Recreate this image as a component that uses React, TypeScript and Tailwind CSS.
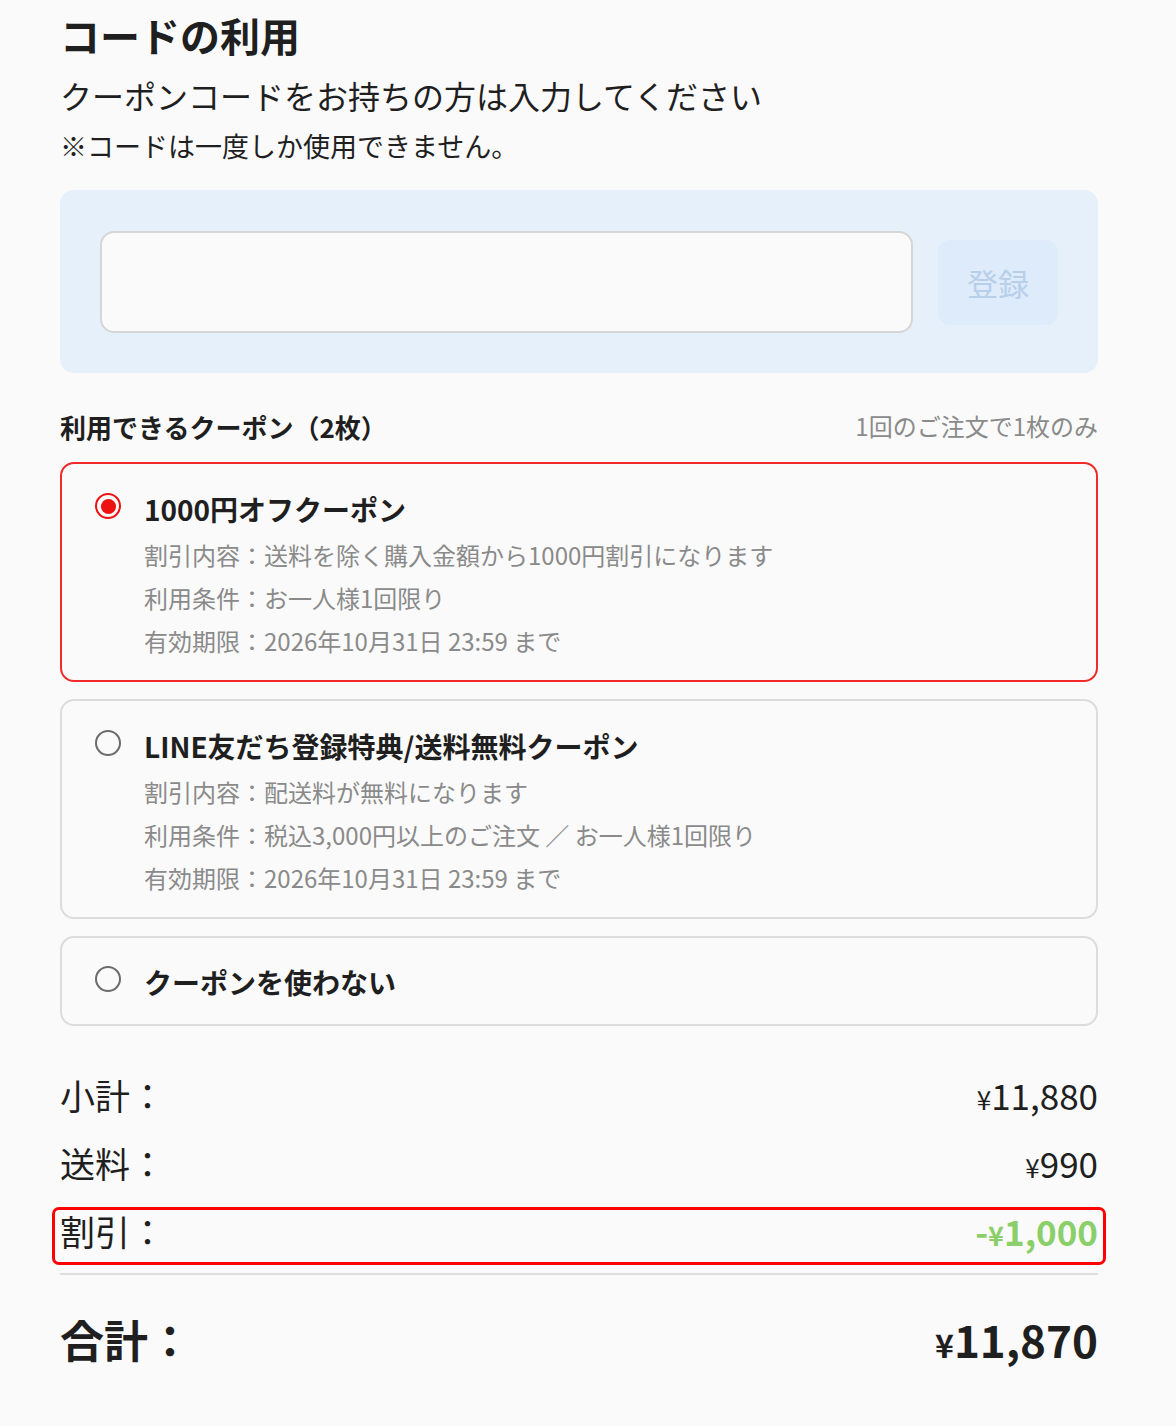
import React from "react";

const font = { fontFamily: '"Noto Sans CJK JP", "Noto Sans", sans-serif' };

function Radio({ checked }: { checked: boolean }) {
  if (checked) {
    return (
      <div className="w-[26px] h-[26px] rounded-full border-[2.5px] border-[#ee1111] flex items-center justify-center shrink-0">
        <div className="w-[15px] h-[15px] rounded-full bg-[#ee1111]" />
      </div>
    );
  }
  return <div className="w-[26px] h-[26px] rounded-full border-2 border-[#6b6b6b] shrink-0" />;
}

type Coupon = {
  title: string;
  lines: string[];
  selected: boolean;
};

const coupons: Coupon[] = [
  {
    title: "1000円オフクーポン",
    lines: [
      "割引内容：送料を除く購入金額から1000円割引になります",
      "利用条件：お一人様1回限り",
      "有効期限：2026年10月31日 23:59 まで",
    ],
    selected: true,
  },
  {
    title: "LINE友だち登録特典/送料無料クーポン",
    lines: [
      "割引内容：配送料が無料になります",
      "利用条件：税込3,000円以上のご注文 ／ お一人様1回限り",
      "有効期限：2026年10月31日 23:59 まで",
    ],
    selected: false,
  },
];

function CouponCard({ c }: { c: Coupon }) {
  return (
    <div
      className={
        "rounded-[14px] border-2 pl-[33px] pt-[25px] pb-[18px] bg-[#fafafa] " +
        (c.selected ? "border-[#f22a2a]" : "border-[#dcdcdc]")
      }
    >
      <div className="flex">
        <div className="mt-[4px] mr-[23px]">
          <Radio checked={c.selected} />
        </div>
        <div className="flex flex-col">
          <div className="text-[28px] leading-[40px] font-bold text-[#1f1f1f]">{c.title}</div>
          <div className="mt-[4px] flex flex-col">
            {c.lines.map((l, i) => (
              <div key={i} className="text-[24px] leading-[43px] text-[#8a8a8a]">
                {l}
              </div>
            ))}
          </div>
        </div>
      </div>
    </div>
  );
}

export default function App() {
  return (
    <div className="min-h-[1426px] bg-[#fafafa] text-[#1f1f1f]" style={font}>
      <div className="w-[1038px] ml-[60px] pt-[5px] pb-[40px]">
        <h1 className="text-[40px] leading-[60px] font-bold">コードの利用</h1>
        <p className="mt-[6px] text-[32px] leading-[48px]">クーポンコードをお持ちの方は入力してください</p>
        <p className="mt-[6px] text-[27px] leading-[42px]">※コードは一度しか使用できません。</p>

        <div className="mt-[23px] rounded-[14px] bg-[#e6f0fb] pl-[40px] pr-[40px] pt-[41px] pb-[40px] flex items-center gap-[25px]">
          <input
            className="flex-1 h-[102px] rounded-[14px] border-2 border-[#d6d6d6] bg-[#fafafa] outline-none px-4 text-[28px]"
            type="text"
          />
          <button className="w-[120px] h-[85px] rounded-[12px] bg-[#deebfa] text-[#b7cfe9] text-[31px] leading-none">
            登録
          </button>
        </div>

        <div className="mt-[33px] flex items-center justify-between h-[40px]">
          <div className="text-[26px] font-bold">利用できるクーポン（2枚）</div>
          <div className="text-[24px] text-[#8a8a8a]">1回のご注文で1枚のみ</div>
        </div>

        <div className="mt-[16px] flex flex-col gap-[17px]">
          {coupons.map((c, i) => (
            <CouponCard key={i} c={c} />
          ))}
          <div className="rounded-[14px] border-2 border-[#dcdcdc] pl-[33px] pt-[24px] pb-[22px]">
            <div className="flex">
              <div className="mt-[4px] mr-[23px]">
                <Radio checked={false} />
              </div>
              <div className="text-[28px] leading-[40px] font-bold">クーポンを使わない</div>
            </div>
          </div>
        </div>

        <div className="mt-[42px] flex flex-col gap-[14px]">
          <div className="flex items-center justify-between h-[54px]">
            <span className="text-[35px]">小計：</span>
            <span className="text-[35px]">
              <span className="text-[26px]">¥</span>11,880
            </span>
          </div>
          <div className="flex items-center justify-between h-[54px]">
            <span className="text-[35px]">送料：</span>
            <span className="text-[35px]">
              <span className="text-[26px]">¥</span>990
            </span>
          </div>
          <div className="relative flex items-center justify-between h-[54px]">
            <span className="text-[35px]">割引：</span>
            <span className="text-[35px] font-bold text-[#8bcf6b]">
              -<span className="text-[27px]">¥</span>1,000
            </span>
            <div className="absolute left-[-8px] right-[-8px] top-[3px] bottom-[-7px] border-[3px] border-[#ff0000] rounded-[7px] pointer-events-none" />
          </div>
        </div>

        <div className="mt-[15px] h-[2px] bg-[#dedede]" />

        <div className="mt-[34px] flex items-center justify-between h-[60px]">
          <span className="text-[44px] font-bold">合計：</span>
          <span className="text-[44px] font-bold">
            <span className="text-[32px]">¥</span>11,870
          </span>
        </div>
      </div>
    </div>
  );
}
